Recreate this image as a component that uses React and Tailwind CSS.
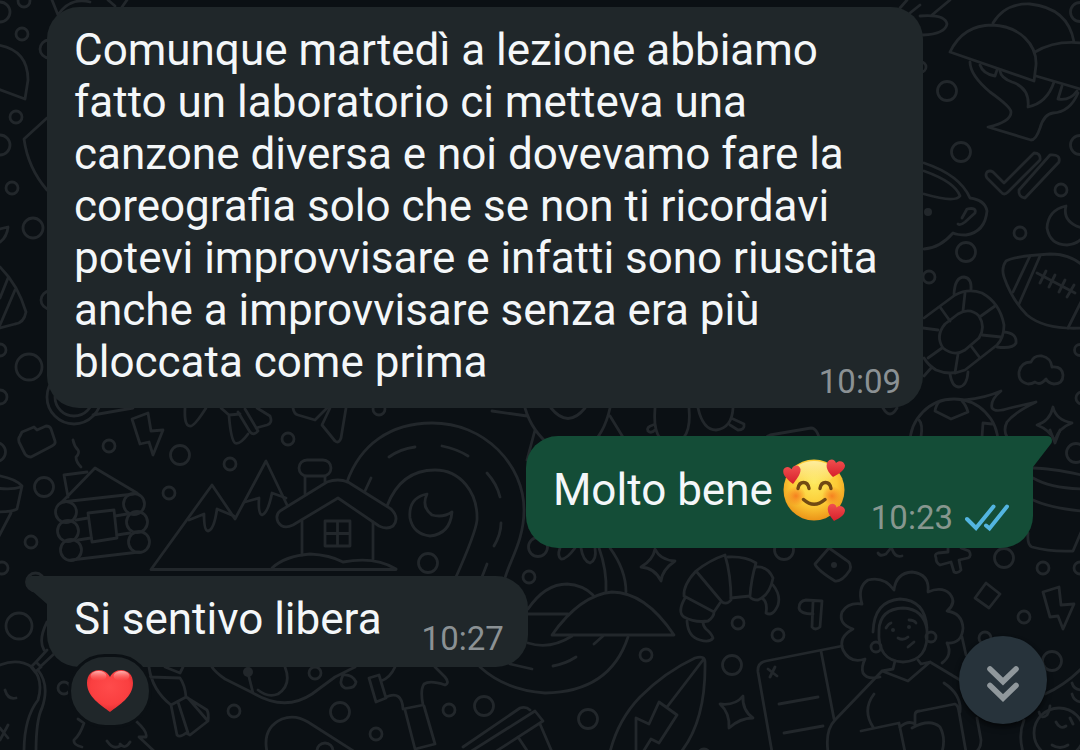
const dots = [
  [0, 12, 10], [24, 1, 6], [22, 34, 6], [16, 117, 6], [0, 145, 10], [12, 188, 6], [33, 228, 10], [29, 367, 13],
  [0, 350, 6], [0, 397, 7], [49, 49, 9], [50, 300, 9], [109, 446, 6], [180, 455, 9.5], [230, 464, 6], [44, 487, 9.5],
  [169, 493, 6], [31, 542, 6], [2, 568, 6], [-4, 452, 9.5], [379, 409, 6], [288, 439, 6], [428, 563, 9.5],
  [529, 577, 6], [538, 547, 9.5], [966, 252, 9.5], [1020, 233, 6], [929, 277, 6], [1080, 350, 5.5], [1082, 398, 6],
  [947, 91, 9.5], [961, 152, 9.5], [1080, 12, 9.5], [1080, 145, 9.5], [1061, 190, 6], [921, 67, 5], [1076, 453, 9.5],
  [646, 655, 6], [588, 719, 9.5], [738, 623, 6], [778, 635, 6], [732, 665, 9.5], [784, 550, 9.5], [1004, 558, 9.5],
  [1043, 568, 6], [1024, 617, 6], [1052, 661, 9.5], [985, 638, 6], [1080, 568, 6], [35.5, 582, 9], [19, 626, 13],
  [64, 688, 6], [234, 711, 6], [315, 673, 6], [340, 712, 9.5], [376, 734, 6], [449, 710, 6], [484, 706, 9.5],
  [325, 751, 8], [704, 755, 6], [74, 397, 27], [74, 397, 19],
  // cabin logs
  [66, 512, 10.5], [68, 531, 10.5], [71, 550, 10.5], [134, 504, 10.5], [137, 522, 10.5], [139, 542, 10.5],
  // football, ears, baby head
  [954, 443, 44], [876, 647, 5], [931, 637, 5], [1059, 733, 25],
];

const filledDots = [[928, 212, 4], [834, 565, 3], [893, 630, 2], [909, 627, 2], [248, 672, 5]];

const doodles = [
  // left edge
  "M-2 45Q28 50 28 80L25 99L-2 89M47 118L24 139Q28 168 47 190M0 229L8 227Q7 237 0 242",
  "M0 267Q18 285 26 312Q24 323 15 324L0 328M8 278L0 298M15 290L0 325",
  "M52 0L58 15Q70 -3 90 2M108 0L115 6M122 7L127 0",
  // brick, steam, lightning
  "M93 415Q110 412 133 408M20 436L22 432L34 427L37 430L46 426Q50 426 51 429L55 441Q56 444 52 446L31 457Q27 457 25 454L19 442Q18 438 20 436Z",
  "M73 440Q74 446 78 450Q80 453 76 457Q76 462 81 467",
  "M132 419L148 413Q151 431 151 431L163 430L153 455L149 442L140 444Z",
  // log cabin
  "M68 497L64 475L87 472M62 502L95 468L137 493M62 502L134 494M88 513L114 510L117 538L92 542Z",
  "M76 520L88 518M78 540L91 538M115 516L127 514M117 535L130 533M71 560L139 552",
  "M-5 475Q15 478 22 486L17 509Q12 512 -5 512M-5 488Q12 490 21 487M11 513L-2 538",
  // mountains
  "M287 505L266 461L235 519L212 485L151 569.5H396",
  "M189 520L204 514Q204 531 208 531Q214 530 217 509L234 516M245 502L259 498Q258 514 262 515Q268 513 272 493L286 498",
  // bow and paper
  "M185 408Q184 426 190 426Q194 427 206 408M221 408L229 415L240 414M229 416Q231 440 235 443Q240 445 248 434",
  "M257 408L270 416Q273 423 267 425L256 428M238 412L250 432Q254 436 258 431L245 409",
  "M293 408Q294 414 298 415L315 420L327 408M330 408L322 425L335 441Q339 444 341 438L346 408",
  // snow house
  "M307 460H323A8 8 0 0 1 323 476H307A8 8 0 0 1 307 460ZM305 477V494M325 477V482",
  "M280 511L327 482Q338 478 348 482L391 509Q400 518 393 526Q387 530 379 526L338 498L293 525Q283 530 278 522Q275 515 280 511Z",
  "M302 521V555M373 522V559M325 521H350V546H325ZM337.5 521V546M325 533.5H350",
  "M272 568Q285 556 310 554Q330 555 343 562Q375 556 396 569",
  // road
  "M347 482C360 445 390 423 432 423C485 423 524 465 524 510C524 540 510 560 505 578",
  "M387 506C395 485 410 470 435 470C460 470 478 492 477 520Q476 532 456 577",
  "M365 491L371 478M389 457Q400 449 415 447M442 446Q457 449 468 456M487 473Q497 484 500 497M501 523Q501 534 494 546M487 564L482 577",
  "M427 494Q408 498 410 518Q413 534 430 536Q450 534 452 512Q443 518 432 515Q421 507 427 494Z",
  // between the first two messages
  "M492 411L527 416M535 430L527 460M525 408Q532 432 552 447M610 408Q604 435 588 447M551 408Q568 429 585 408M610 416L629 447M600 437L622 447",
  "M655 408Q652 443 672 444Q692 441 689 408M653 425Q646 427 648 431Q651 434 655 430M698 408Q703 430 716 430Q732 428 733 408M731 418L744 424Q745 430 738 430L730 425",
  "M763 449Q763 437 770 435L811 428Q819 428 821 449M862 449L880 445L886 449M883 408Q890 420 897 408",
  "M939 402Q936 405 935 411L951 419L968 412Q966 405 962 401M919 420Q923 424 921 437M982 437L983 423L992 424",
  "M965 400Q985 398 1001 391Q990 400 992 408Q995 413 1010 408L1036 402Q1015 412 1007 422Q1003 430 1007 437",
  "M1053 407Q1056 420 1072 423Q1058 428 1055 441Q1050 430 1037 425Q1050 421 1053 407Z",
  // turtle
  "M924 318L955 295Q968 288 982 293Q1000 303 1004 325Q1004 338 997 345L965 370Q950 376 936 370Q928 365 924 358",
  "M945 324L958 314Q970 307 979 316Q986 327 979 338L965 350Q954 357 943 348Q935 336 945 324Z",
  "M954 294Q955 277 964 277Q972 278 971 290M1004 332Q1017 333 1016 343Q1013 349 997 347M950 374Q952 387 959 387Q967 386 968 372",
  "M965 293L963 311M995 306L981 316M1001 337L982 335M980 358L971 346M955 373L958 354M928 358L942 348M923 328L938 330M940 307L950 321M924 376L932 367",
  // american football
  "M1082 265Q1070 254 1050 254Q1015 256 1006 261Q1001 268 1004 277Q1012 300 1027 315Q1045 330 1082 328",
  "M1030 256L1013 292M1040 256L1019 304M1037 273L1075 293M1046 271L1040 283M1055 275L1049 287M1065 280L1059 292M1074 285L1067 297M1082 300L1068 328",
  "M1028 384Q1018 382 1019 372Q1021 362 1031 362Q1034 355 1042 356Q1051 358 1052 367Q1062 366 1063 375Q1063 384 1054 384Q1048 383 1046 379Q1040 386 1035 382Q1032 384 1028 384Z",
  "M1083 237Q1078 244 1067 245Q1050 245 1047 228Q1048 210 1066 206Q1062 222 1082 228",
  // mushrooms
  "M900 8L907 0M910 13L920 5M932 15L950 0M920 16Q945 14 947 24Q945 34 923 35",
  "M950 52Q963 25 992 25C1020 26 1037 45 1036 65L1034 81ZM993 23Q1005 3 1030 4Q1068 8 1074 42M1035 52Q1055 40 1082 43M1036 76L1080 89",
  "M970 62Q970 75 990 92Q1011 107 1011 112Q1011 122 988 127L1031 140Q1036 140 1040 128Q1044 114 1053 113Q1070 112 1078 93",
  "M980 65Q983 74 995 76L997 70M1000 71Q1001 78 1012 82Q1030 88 1028 107Q1047 103 1054 82M1062 86L1058 99Q1070 101 1077 91",
  // double tick
  "M987 172Q985 175 987 178L1001 192Q1004 196 1008 192L1040 160Q1041 153 1034 153L1004 183L993 172Q990 170 987 172Z",
  "M1050 155L1019 190Q1018 197 1025 198L1059 162Q1061 154 1050 155Z",
  // cup
  "M924 163Q960 175 970 198Q985 200 987 211Q985 232 966 235Q957 235 953 233Q940 248 924 249",
  "M924 171Q955 182 960 196Q955 203 924 194M962 218L967 209Q977 207 975 213L965 222Q960 226 958 224",
  // pot
  "M1050 430L1055 443L1060 430M1033 468Q1050 468 1082 475M1033 478Q1050 488 1082 489M1033 500Q1050 508 1082 511M1028 533Q1027 545 1032 547Q1050 552 1073 551L1082 530",
  // island
  "M560 548Q557 556 561 559Q566 560 575 548M581 548Q583 561 590 563Q597 560 595 548M599 548Q607 570 606 592M610 548Q626 570 626 592",
  "M528 609Q545 584 567 584Q583 585 593 595M528 614H568M552 635H674Q645 592 612 592Q580 595 552 635Z",
  "M528 643Q550 650 572 636M628 637Q610 692 545 693Q505 690 480 667M510 664L532 669M553 666Q565 664 576 657M594 644L603 636",
  "M655 549Q660 560 675 561Q662 570 661 581Q655 568 641 567Q653 560 655 549Z",
  // croissant
  "M685 598Q677 612 684 617Q695 623 708 621Q714 617 714 612L720 603M696 571Q710 560 725 555Q731 575 731 600Q727 605 722 602L696 571Q683 585 684 596L714 612",
  "M728 557Q745 556 756 563Q751 580 750 596Q740 597 731 598M756 567Q768 566 773 578Q770 595 758 600Q752 600 750 597M773 585Q781 595 778 605Q773 617 766 613Q768 602 762 598M687 621Q688 637 700 640Q710 643 713 638Q712 634 706 629Q703 626 703 622",
  // leaf
  "M610 752Q618 720 640 697Q665 672 695 658Q705 655 705 662Q706 720 681 752M703 660L667 707M636 752V718L649 724L659 702L677 715L659 743L651 739L643 752",
  "M743 696Q742 710 753 718Q740 718 729 728Q730 713 720 704Q735 706 743 696Z",
  // sheet of paper
  "M772 752L758 672Q757 663 766 661L842 646M821 651L834 719M768 669L777 676M775 667L770 677M779 704L818 697M784 733L823 726",
  "M822 601L806 600Q799 601 799 608Q800 614 813 614M813 602L812 627Q815 631 820 627L822 601",
  "M829 548L815 564Q817 570 835 581Q842 582 850 570Q852 563 846 560L829 548M878 553Q880 557 886 554L890 549M892 549Q895 558 902 556",
  "M961 548L969 551Q972 556 968 558L959 560L961 570Q958 574 954 572L951 562L940 565Q936 563 936 558Q934 554 938 553L948 552V548",
  "M986 583L1000 594L989 608L975 598ZM1043 592L1059 587L1061 605L1074 604L1063 629L1058 616L1050 617Z",
  // woman with a book
  "M880 677Q867 680 863 673Q861 667 865 659Q850 664 843 650Q838 637 853 629Q838 624 842 612Q848 602 862 604Q857 587 868 580Q884 576 894 590Q896 573 912 572Q930 574 928 592Q942 586 950 594Q957 603 947 611Q962 613 963 628Q962 644 947 643Q953 655 942 663",
  "M879 630Q880 609 903 608Q924 609 927 630Q929 661 903 662Q877 661 879 630ZM873 632Q874 601 900 599Q925 600 927 628",
  "M886 628Q888 624 891 623M909 620Q914 620 916 623M898 638Q903 641 908 637M908 647L914 642",
  "M895 661L893 669L882 671L835 720Q825 730 828 752M882 671L908 681L930 662L960 680M918 660L921 664L930 662M874 694Q862 710 873 727M861 731L899 723L905 752",
  "M944 683Q962 695 960 712M915 725V715Q915 711 920 711L955 704Q958 705 959 712L966 752M912 728Q930 718 940 727Q946 738 942 752M900 727Q908 720 915 724M962 637L966 655M977 718L981 740Q981 748 976 752",
  // baby
  "M1024 720Q1018 735 1023 752M1039 712Q1041 720 1047 715Q1050 710 1050 706M1056 722Q1060 730 1066 726M1070 718L1073 724M1052 745Q1060 750 1068 745M1045 694Q1065 685 1082 668M1072 683Q1074 690 1082 690M1072 694Q1074 702 1082 702",
  // bottom left
  "M0 665Q18 658 32 667Q44 680 38 700Q24 718 24 752M38 670Q50 685 42 708Q36 720 36 752M36 662L41 667L35 672L31 667ZM36 662L47 650M41 666L55 653M47 622Q38 640 44 650M5 690Q8 700 16 698M0 740L8 725M0 728L8 738",
  "M78 719L84 723Q80 735 74 740Q73 745 82 747M107 741Q113 750 120 746M120 744Q125 750 130 742M136 721Q148 732 146 737H139L155 752",
  // broom
  "M149 667Q152 690 171 705L186 697Q185 685 180 678L150 677M171 705L177 735Q180 738 186 733L190 735L208 721Q209 714 207 710L186 697M178 702L188 733M188 698L207 720M165 667L180 673L183 667",
  "M212 667Q215 672 225 679L253 693L248 673M253 693Q285 712 312 694L335 677Q345 672 355 667M343 675Q338 685 345 688Q355 689 356 682Q352 674 343 675ZM285 667Q292 685 278 694Q268 698 258 690",
  "M267 752Q262 728 282 719Q295 714 308 722L355 752",
  // hammer
  "M369 678L379 675L386 698L376 702ZM381 681Q390 678 395 667M386 697Q402 690 403 709L423 705Q420 690 424 684Q430 680 445 685Q450 683 445 677Q440 672 435 667M405 710L415 749L435 744L424 706",
  "M463 747L520 708Q526 706 530 710M470 752L535 711L543 721L495 752M518 737L528 752M540 724L552 752",
];

const Wallpaper = () => (
  <svg
    className="absolute inset-0 h-full w-full"
    viewBox="0 0 1080 750"
    preserveAspectRatio="xMidYMid slice"
    fill="none"
    stroke="#22272b"
    strokeWidth="2.8"
    strokeLinecap="round"
    strokeLinejoin="round"
    aria-hidden="true"
  >
    {doodles.map((d) => (
      <path key={d} d={d} />
    ))}
    {dots.map(([x, y, r]) => (
      <circle key={`${x}-${y}-${r}`} cx={x} cy={y} r={r} />
    ))}
    {filledDots.map(([x, y, r]) => (
      <circle key={`${x}-${y}`} cx={x} cy={y} r={r} fill="#22272b" stroke="none" />
    ))}
  </svg>
);

const LovingFace = () => (
  <svg className="h-16 w-16 shrink-0" viewBox="0 0 64 64" role="img" aria-label="🥰">
    <defs>
      <radialGradient id="skin" cx="0.5" cy="0.38" r="0.62">
        <stop offset="0" stopColor="#fde95c" />
        <stop offset="0.6" stopColor="#fccb36" />
        <stop offset="1" stopColor="#ec9418" />
      </radialGradient>
      <linearGradient id="shine" x1="0" y1="0" x2="0" y2="1">
        <stop offset="0" stopColor="#fff6b8" stopOpacity="0.8" />
        <stop offset="1" stopColor="#fff6b8" stopOpacity="0" />
      </linearGradient>
      <radialGradient id="cheek">
        <stop offset="0" stopColor="#f5741c" stopOpacity="0.85" />
        <stop offset="1" stopColor="#f5741c" stopOpacity="0" />
      </radialGradient>
      <linearGradient id="smallHeart" x1="0" y1="0" x2="0" y2="1">
        <stop offset="0" stopColor="#f0504f" />
        <stop offset="1" stopColor="#d71f2b" />
      </linearGradient>
    </defs>
    <circle cx="31" cy="32" r="30.5" fill="url(#skin)" />
    <ellipse cx="31" cy="15" rx="20" ry="12" fill="url(#shine)" />
    <circle cx="13" cy="38" r="10" fill="url(#cheek)" />
    <circle cx="49" cy="38" r="10" fill="url(#cheek)" />
    <path
      d="M15 30.5Q16 24.500 20.500 24.500Q25 24.500 26 30.500M37 30.500Q38 24.500 42.500 24.500Q47 24.500 48 30.500"
      fill="none"
      stroke="#714913"
      strokeWidth="3.4"
      strokeLinecap="round"
    />
    <path d="M20.500 41.500Q31 51 42 41.500" fill="none" stroke="#714913" strokeWidth="3.4" strokeLinecap="round" />
    <g fill="url(#smallHeart)">
      <path d="M10 26C4 21 -1 17 0.500 11.500C2 8 7 8 8.500 11.500C10 6.500 16 6 17.500 11C18 16 14 21 10 26Z" />
      <path d="M50 19C45 14 42 9 44.500 4C47 0 52 1 53 5C56 2 61 3 62 7.500C62 12 56 16 50 19Z" />
      <path d="M51 63C47 58 43 53 45.500 48C48 44.500 53 45.500 53.500 49.500C56 46.500 61 48 62 52C62 57 57 60 51 63Z" />
    </g>
  </svg>
);

const Heart = () => (
  <svg className="h-[42px] w-12" viewBox="0 0 48 42" role="img" aria-label="❤️">
    <defs>
      <radialGradient id="heart" cx="0.5" cy="0.4" r="0.6">
        <stop offset="0" stopColor="#ff4b4b" />
        <stop offset="0.7" stopColor="#fa3f40" />
        <stop offset="1" stopColor="#e02c30" />
      </radialGradient>
      <linearGradient id="gloss" x1="0" y1="0" x2="0" y2="1">
        <stop offset="0" stopColor="#ffc0bc" stopOpacity="0.9" />
        <stop offset="1" stopColor="#ff6a66" stopOpacity="0" />
      </linearGradient>
    </defs>
    <path d="M24 42C15 35 1 27 1 13C1 5 6 0 13 0C18 0 22 3 24 7C26 3 30 0 35 0C42 0 47 5 47 13C47 27 33 35 24 42Z" fill="url(#heart)" />
    <ellipse cx="12.5" cy="6" rx="8" ry="5" fill="url(#gloss)" />
    <ellipse cx="35.5" cy="6" rx="8" ry="5" fill="url(#gloss)" />
  </svg>
);

const ReadTicks = () => (
  <svg className="h-8 w-11" viewBox="0 0 44 32" fill="none" stroke="#53b5e0" strokeWidth="4" strokeLinecap="round" aria-hidden="true">
    <path d="M2 17L11 26L28.5 4.5M21 23.5L24.5 26.5L42 4.5" />
  </svg>
);

const Time = ({ children }) => (
  <time className="block text-[33px] leading-9">{children}</time>
);

const App = () => {
  return (
    <div className="relative flex min-h-screen flex-col overflow-hidden bg-[#0b1014] font-['Roboto',sans-serif] text-[44px] leading-[52px] text-[#f4f7f9]">
      <Wallpaper />

      <main className="relative flex flex-col gap-7 px-[47px] pt-[7px]">
        <div className="flow-root w-fit max-w-[876px] rounded-[32px] bg-[#20272a] pt-[17px] pr-[22px] pb-2 pl-[27px]">
          Comunque martedì a lezione abbiamo fatto un laboratorio ci metteva una canzone diversa e noi dovevamo fare la
          coreografia solo che se non ti ricordavi potevi improvvisare e infatti sono riuscita anche a improvvisare
          senza era più bloccata come prima
          <div className="float-right mt-7 text-[#8b9194]">
            <Time>10:09</Time>
          </div>
        </div>

        <div className="relative flex w-fit items-end gap-6 self-end rounded-[32px] rounded-tr-none bg-[#144d37] pt-[22px] pr-6 pb-3 pl-[27px]">
          <svg className="absolute top-0 left-full h-[31px] w-5" viewBox="0 0 20 31" aria-hidden="true">
            <path d="M-1 0H14Q19 0 19 5Q19 7 17 9L0 31H-1Z" fill="#144d37" />
          </svg>
          <div className="mb-3.5 flex items-center gap-2.5">
            <p>Molto bene</p>
            <LovingFace />
          </div>
          <div className="flex items-center gap-3 text-[#87978f]">
            <Time>10:23</Time>
            <ReadTicks />
          </div>
        </div>

        <div className="relative flex w-fit items-end gap-10 rounded-[32px] rounded-tl-none bg-[#20272a] pt-[17px] pr-6 pb-2.5 pl-[27px]">
          <svg className="absolute top-0 right-full h-7 w-[21px]" viewBox="0 0 21 28" aria-hidden="true">
            <path d="M22 0H5Q0 1 0 6Q0 10 5 14L21 28H22Z" fill="#20272a" />
          </svg>
          <p className="mb-3">Si sentivo libera</p>
          <div className="text-[#8b9194]">
            <Time>10:27</Time>
          </div>
          <button
            type="button"
            className="absolute top-[78px] left-[21px] flex h-[74px] w-[84px] items-center justify-center rounded-full border-[3px] border-[#0b1014] bg-[#20272a]"
          >
            <Heart />
          </button>
        </div>
      </main>

      <button
        type="button"
        className="absolute right-[33px] bottom-[26px] flex h-[88px] w-[88px] items-center justify-center rounded-full bg-[#27333b] shadow-md shadow-black/50"
      >
        <svg className="h-12 w-10" viewBox="0 0 40 48" fill="none" stroke="#90989c" strokeWidth="5.6" strokeLinecap="round" aria-hidden="true">
          <path d="M7 13L20 25.5L33 13M7 29.5L20 42L33 29.5" />
        </svg>
      </button>
    </div>
  );
};

export default App;
